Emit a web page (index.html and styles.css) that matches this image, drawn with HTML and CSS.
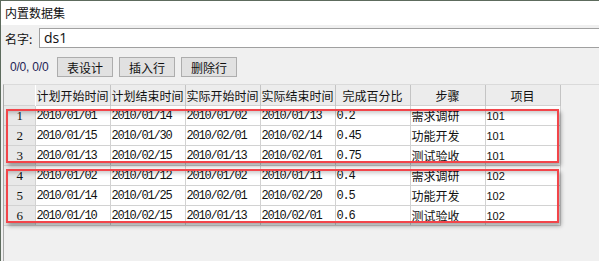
FILE: index.html
```html
<!DOCTYPE html>
<html lang="zh">
<head>
  <meta charset="UTF-8">
  <title>内置数据集</title>
  <link rel="stylesheet" href="styles.css">
</head>
<body>
  <div class="window">
    <div class="title">内置数据集</div>

    <div class="name-row">
      <span class="label">名字:</span>
      <div class="name-input">ds1</div>
    </div>

    <div class="toolbar">
      <span class="pos">0/0, 0/0</span>
      <button class="btn">表设计</button>
      <button class="btn">插入行</button>
      <button class="btn">删除行</button>
    </div>

    <div class="grid-area">
      <table class="grid">
        <colgroup>
          <col class="c-num">
          <col class="c-col"><col class="c-col"><col class="c-col"><col class="c-col">
          <col class="c-col"><col class="c-col"><col class="c-col">
        </colgroup>
        <thead>
          <tr>
            <th></th>
            <th>计划开始时间</th>
            <th>计划结束时间</th>
            <th>实际开始时间</th>
            <th>实际结束时间</th>
            <th>完成百分比</th>
            <th>步骤</th>
            <th>项目</th>
          </tr>
        </thead>
        <tbody>
          <tr><td class="num">1</td><td class="mono">2010/01/01</td><td class="mono">2010/01/14</td><td class="mono">2010/01/02</td><td class="mono">2010/01/13</td><td class="mono">0.2</td><td>需求调研</td><td class="id">101</td></tr>
          <tr><td class="num">2</td><td class="mono">2010/01/15</td><td class="mono">2010/01/30</td><td class="mono">2010/02/01</td><td class="mono">2010/02/14</td><td class="mono">0.45</td><td>功能开发</td><td class="id">101</td></tr>
          <tr><td class="num">3</td><td class="mono">2010/01/13</td><td class="mono">2010/02/15</td><td class="mono">2010/01/13</td><td class="mono">2010/02/01</td><td class="mono">0.75</td><td>测试验收</td><td class="id">101</td></tr>
          <tr><td class="num">4</td><td class="mono">2010/01/02</td><td class="mono">2010/01/12</td><td class="mono">2010/01/02</td><td class="mono">2010/01/11</td><td class="mono">0.4</td><td>需求调研</td><td class="id">102</td></tr>
          <tr><td class="num">5</td><td class="mono">2010/01/14</td><td class="mono">2010/01/25</td><td class="mono">2010/02/01</td><td class="mono">2010/02/20</td><td class="mono">0.5</td><td>功能开发</td><td class="id">102</td></tr>
          <tr><td class="num">6</td><td class="mono">2010/01/10</td><td class="mono">2010/02/15</td><td class="mono">2010/01/13</td><td class="mono">2010/02/01</td><td class="mono">0.6</td><td>测试验收</td><td class="id">102</td></tr>
        </tbody>
      </table>

      <!-- 标注框 -->
      <div class="mark mark-1"></div>
      <div class="mark mark-2"></div>
    </div>
  </div>
</body>
</html>
```

FILE: styles.css
```css
body {
  margin: 0;
  font-family: "Noto Sans CJK SC", "Noto Sans", sans-serif;
  font-size: 12px;
  color: #111;
  background: #f0f0f0;
}
.window {
  height: 260px;
  border-top: 1px solid #5d6b5d;
  border-left: 1px solid #5d6b5d;
  display: flex;
  flex-direction: column;
  overflow: hidden;
}
.title {
  height: 24px;
  line-height: 24px;
  padding-left: 4px;
  background: #fff;
  font-size: 12px;
}
.name-row {
  display: flex;
  align-items: center;
  margin-top: 3px;
  height: 20px;
}
.label {
  width: 34px;
  padding-left: 4px;
}
.name-input {
  flex: 1;
  height: 18px;
  line-height: 18px;
  background: #fff;
  border-top: 1px solid #a0a0a0;
  border-bottom: 1px solid #a0a0a0;
  border-left: 1px solid #a0a0a0;
  padding-left: 4px;
  font-family: "Open Sans", "Noto Sans", sans-serif;
  font-size: 14px;
}
.toolbar {
  display: flex;
  align-items: center;
  gap: 6px;
  margin-top: 9px;
  height: 20px;
  padding-left: 9px;
}
.pos {
  color: #1e2454;
  font-family: "Liberation Sans", sans-serif;
  font-size: 12px;
  white-space: nowrap;
  width: 41px;
  letter-spacing: -0.2px;
}
.btn {
  width: 56px;
  height: 20px;
  padding: 0;
  background: #e1e1e1;
  border: 1px solid #adadad;
  font-family: "Noto Sans CJK SC", sans-serif;
  font-size: 12px;
  color: #111;
}
.grid-area {
  position: relative;
  flex: 1;
  margin-top: 7px;
  margin-left: 2px;
  border-left: 1px solid #a8a8a8;
  border-top: 1px solid #dadada;
}
.grid {
  border-collapse: collapse;
  table-layout: fixed;
  width: 556px;
}
.c-num { width: 31px; }
.c-col { width: 75px; }
.grid th {
  height: 20px;
  padding: 0;
  font-weight: normal;
  font-size: 12px;
  background: #ececec;
  border-right: 1px solid #c4c4c4;
  white-space: nowrap;
  overflow: hidden;
  text-align: center;
}
.grid th:first-child {
  border-right-color: #fff;
}
.grid td {
  height: 19px;
  padding: 0 0 0 1px;
  background: #fff;
  border: 1px solid #d2d2d2;
  white-space: nowrap;
  overflow: hidden;
}
.grid td.num {
  background: #e8e8e8;
  text-align: center;
  font-family: "Liberation Serif", serif;
  font-size: 13px;
  border-left: none;
}
.mono {
  font-family: "Liberation Mono", monospace;
  font-size: 12px;
  letter-spacing: -1.2px;
}
.id {
  font-family: "Liberation Sans", sans-serif;
  font-size: 11px;
}
.mark {
  position: absolute;
  left: 2px;
  width: 549px;
  border: 2px solid #f2454a;
  box-shadow: 2px 3px 4px rgba(0, 0, 0, 0.35), inset 0 5px 4px -3px rgba(0, 0, 0, 0.22);
}
.mark-1 {
  top: 24px;
  height: 50px;
}
.mark-2 {
  top: 84px;
  height: 50px;
}
```
